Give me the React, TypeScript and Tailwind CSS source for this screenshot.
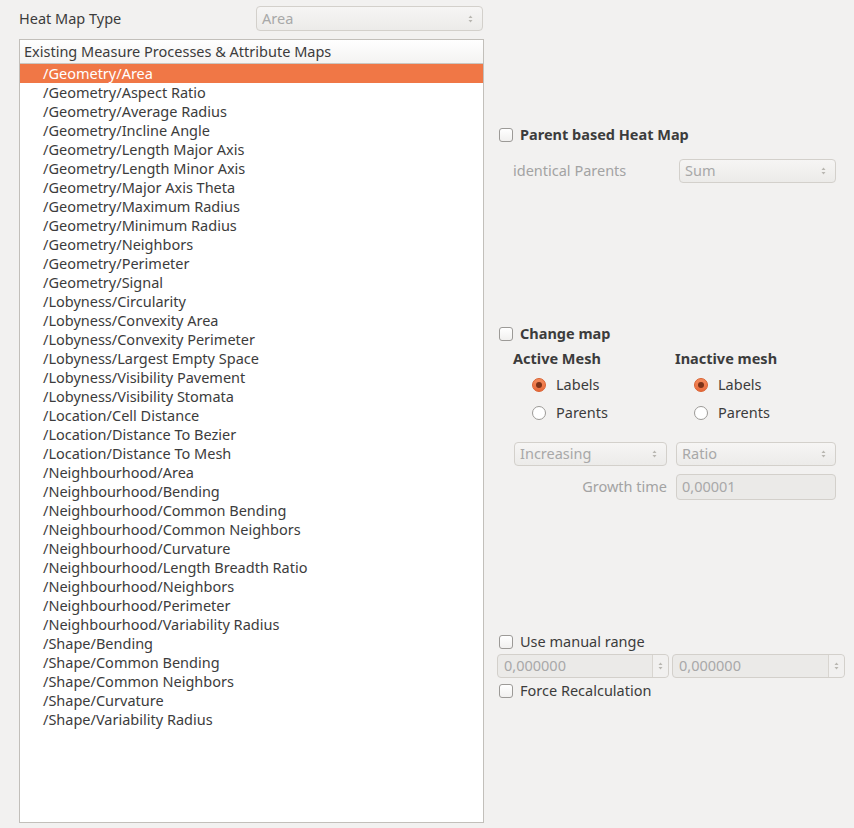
import React from 'react';

const ITEMS = [
  '/Geometry/Area',
  '/Geometry/Aspect Ratio',
  '/Geometry/Average Radius',
  '/Geometry/Incline Angle',
  '/Geometry/Length Major Axis',
  '/Geometry/Length Minor Axis',
  '/Geometry/Major Axis Theta',
  '/Geometry/Maximum Radius',
  '/Geometry/Minimum Radius',
  '/Geometry/Neighbors',
  '/Geometry/Perimeter',
  '/Geometry/Signal',
  '/Lobyness/Circularity',
  '/Lobyness/Convexity Area',
  '/Lobyness/Convexity Perimeter',
  '/Lobyness/Largest Empty Space',
  '/Lobyness/Visibility Pavement',
  '/Lobyness/Visibility Stomata',
  '/Location/Cell Distance',
  '/Location/Distance To Bezier',
  '/Location/Distance To Mesh',
  '/Neighbourhood/Area',
  '/Neighbourhood/Bending',
  '/Neighbourhood/Common Bending',
  '/Neighbourhood/Common Neighbors',
  '/Neighbourhood/Curvature',
  '/Neighbourhood/Length Breadth Ratio',
  '/Neighbourhood/Neighbors',
  '/Neighbourhood/Perimeter',
  '/Neighbourhood/Variability Radius',
  '/Shape/Bending',
  '/Shape/Common Bending',
  '/Shape/Common Neighbors',
  '/Shape/Curvature',
  '/Shape/Variability Radius',
];

const Arrows = () => (
  <svg width="7" height="12" viewBox="0 0 7 12" className="shrink-0">
    <path d="M3.5 2.5 L5.5 5 L1.5 5 Z" fill="#b8b6b1" />
    <path d="M3.5 9.5 L5.5 7 L1.5 7 Z" fill="#b8b6b1" />
  </svg>
);

const Combo = ({ value, className }: { value: string; className: string }) => (
  <div
    className={`flex items-center justify-between pl-[5px] pr-[8px] rounded-[4px] border border-[#d3d0cb] bg-gradient-to-b from-[#f6f5f4] to-[#ecebe9] text-[#a8a8a8] ${className}`}
  >
    <span>{value}</span>
    <Arrows />
  </div>
);

const Spin = ({ value, className }: { value: string; className: string }) => (
  <div className={`flex rounded-[4px] border border-[#d3d0cb] bg-[#ebeae8] text-[#a8a8a8] ${className}`}>
    <span className="flex-1 pl-[6px] flex items-center">{value}</span>
    <div className="w-[16px] border-l border-[#d8d5d0] flex items-center justify-center bg-[#f1f0ef] rounded-r-[4px]">
      <Arrows />
    </div>
  </div>
);

const Check = ({ label, bold }: { label: string; bold?: boolean }) => (
  <div className="flex items-center h-[20px] pl-[2px]">
    <div className="w-[14px] h-[14px] rounded-[3px] border border-[#9c9a97] bg-gradient-to-b from-white to-[#f1f0ef]" />
    <span className={`ml-[7px] text-[#3c3c3c] ${bold ? 'font-bold' : ''}`}>{label}</span>
  </div>
);

const Radio = ({ label, checked }: { label: string; checked?: boolean }) => (
  <div className="flex items-center h-[20px]">
    {checked ? (
      <div className="w-[14px] h-[14px] rounded-full border border-[#d9602f] bg-gradient-to-b from-[#f48b5c] to-[#e8693a] flex items-center justify-center">
        <div className="w-[6px] h-[6px] rounded-full bg-[#7c3218]" />
      </div>
    ) : (
      <div className="w-[14px] h-[14px] rounded-full border border-[#9c9a97] bg-white" />
    )}
    <span className="ml-[10px] text-[#3c3c3c]">{label}</span>
  </div>
);

export default function App() {
  return (
    <div
      className="w-[854px] h-[828px] bg-[#f2f1f0] flex text-[14.5px] text-[#3c3c3c]"
      style={{ fontFamily: '"Noto Sans", "Open Sans", sans-serif' }}
    >
      <div className="ml-[19px] w-[465px] flex flex-col">
        <div className="h-[39px] flex items-start">
          <span className="mt-[8px]">Heat Map Type</span>
          <Combo value="Area" className="ml-auto mt-[6px] w-[227px] h-[25px] mr-[1px]" />
        </div>
        <div className="flex-1 mb-[5px] border border-[#c2bfba] bg-white flex flex-col">
          <div className="h-[24px] pl-[4px] flex items-center border-b border-[#c9c6c1] bg-gradient-to-b from-white to-[#f4f3f2]">
            Existing Measure Processes &amp; Attribute Maps
          </div>
          {ITEMS.map((item, i) => (
            <div
              key={item}
              className={`h-[19px] pl-[23px] flex items-center leading-none ${
                i === 0 ? 'bg-[#f07746] text-white' : ''
              }`}
            >
              {item}
            </div>
          ))}
        </div>
      </div>

      <div className="ml-[13px] flex-1 flex flex-col">
        <div className="mt-[125px]">
          <Check label="Parent based Heat Map" bold />
        </div>
        <div className="mt-[14px] flex items-center h-[24px]">
          <span className="ml-[16px] text-[#a3a3a3]">identical Parents</span>
          <Combo value="Sum" className="ml-auto mr-[18px] w-[157px] h-[24px]" />
        </div>
        <div className="mt-[141px]">
          <Check label="Change map" bold />
        </div>
        <div className="mt-[5px] flex h-[20px] items-center font-bold">
          <span className="ml-[16px] w-[162px]">Active Mesh</span>
          <span>Inactive mesh</span>
        </div>
        <div className="mt-[6px] flex">
          <div className="ml-[35px] w-[162px]">
            <Radio label="Labels" checked />
          </div>
          <Radio label="Labels" checked />
        </div>
        <div className="mt-[8px] flex">
          <div className="ml-[35px] w-[162px]">
            <Radio label="Parents" />
          </div>
          <Radio label="Parents" />
        </div>
        <div className="mt-[19px] flex">
          <Combo value="Increasing" className="ml-[17px] w-[153px] h-[24px]" />
          <Combo value="Ratio" className="ml-[9px] w-[160px] h-[24px]" />
        </div>
        <div className="mt-[8px] flex items-center">
          <span className="ml-auto mr-[9px] text-[#a3a3a3]">Growth time</span>
          <div className="w-[160px] h-[26px] mr-[18px] rounded-[4px] border border-[#d3d0cb] bg-[#ebeae8] text-[#a8a8a8] flex items-center pl-[5px]">
            0,00001
          </div>
        </div>
        <div className="mt-[132px]">
          <Check label="Use manual range" />
        </div>
        <div className="mt-[2px] flex">
          <Spin value="0,000000" className="w-[172px] h-[24px]" />
          <Spin value="0,000000" className="ml-[3px] w-[173px] h-[24px]" />
        </div>
        <div className="mt-[3px]">
          <Check label="Force Recalculation" />
        </div>
      </div>
    </div>
  );
}
